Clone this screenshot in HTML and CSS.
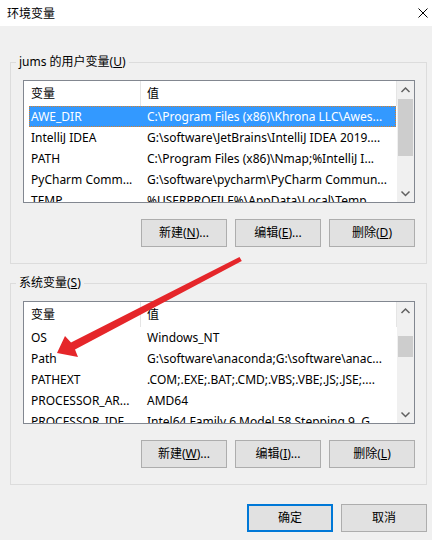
FILE: index.html
```html
<!DOCTYPE html>
<html lang="zh-CN">
<head>
<meta charset="utf-8">
<title>环境变量</title>
<link rel="stylesheet" href="styles.css">
</head>
<body>
<div class="titlebar">
  <span class="title">环境变量</span>
  <svg class="close" width="10" height="10" viewBox="0 0 10 10"><path d="M0.5 0.5 L9.5 9.5 M9.5 0.5 L0.5 9.5" stroke="#000" stroke-width="1" fill="none"/></svg>
</div>
<div class="content">
  <section class="group">
    <div class="group-title">jums 的用户变量(<u>U</u>)</div>
    <div class="list">
      <div class="list-body">
        <div class="lv-header"><div class="c1">变量</div><div class="c2">值</div></div>
        <div class="row selected"><div class="c1">AWE_DIR</div><div class="c2">C:\Program Files (x86)\Khrona LLC\Awes...</div></div>
        <div class="row"><div class="c1">IntelliJ IDEA</div><div class="c2">G:\software\JetBrains\IntelliJ IDEA 2019....</div></div>
        <div class="row"><div class="c1">PATH</div><div class="c2">C:\Program Files (x86)\Nmap;%IntelliJ I...</div></div>
        <div class="row"><div class="c1">PyCharm Comm...</div><div class="c2">G:\software\pycharm\PyCharm Commun...</div></div>
        <div class="row"><div class="c1">TEMP</div><div class="c2">%USERPROFILE%\AppData\Local\Temp</div></div>
      </div>
      <div class="scrollbar">
        <div class="sb-btn"><svg width="17" height="17" viewBox="0 0 17 17"><polyline points="4.5,11 8.5,7 12.5,11" fill="none" stroke="#606060" stroke-width="1.5"/></svg></div>
        <div class="sb-track"><div class="sb-thumb" style="margin-top:1px;height:57px"></div></div>
        <div class="sb-btn"><svg width="17" height="17" viewBox="0 0 17 17"><polyline points="4.5,6.5 8.5,10.5 12.5,6.5" fill="none" stroke="#606060" stroke-width="1.5"/></svg></div>
      </div>
    </div>
    <div class="buttons">
      <button class="btn">新建(<u>N</u>)...</button>
      <button class="btn">编辑(<u>E</u>)...</button>
      <button class="btn">删除(<u>D</u>)</button>
    </div>
  </section>

  <section class="group group-system">
    <div class="group-title">系统变量(<u>S</u>)</div>
    <div class="list">
      <div class="list-body">
        <div class="lv-header"><div class="c1">变量</div><div class="c2">值</div></div>
        <div class="row"><div class="c1">OS</div><div class="c2">Windows_NT</div></div>
        <div class="row"><div class="c1">Path</div><div class="c2">G:\software\anaconda;G:\software\anac...</div></div>
        <div class="row"><div class="c1">PATHEXT</div><div class="c2">.COM;.EXE;.BAT;.CMD;.VBS;.VBE;.JS;.JSE;....</div></div>
        <div class="row"><div class="c1">PROCESSOR_AR...</div><div class="c2">AMD64</div></div>
        <div class="row"><div class="c1">PROCESSOR_IDE...</div><div class="c2">Intel64 Family 6 Model 58 Stepping 9, G...</div></div>
      </div>
      <div class="scrollbar">
        <div class="sb-btn"><svg width="17" height="17" viewBox="0 0 17 17"><polyline points="4.5,11 8.5,7 12.5,11" fill="none" stroke="#606060" stroke-width="1.5"/></svg></div>
        <div class="sb-track"><div class="sb-thumb" style="margin-top:17px;height:21px"></div></div>
        <div class="sb-btn"><svg width="17" height="17" viewBox="0 0 17 17"><polyline points="4.5,6.5 8.5,10.5 12.5,6.5" fill="none" stroke="#606060" stroke-width="1.5"/></svg></div>
      </div>
    </div>
    <div class="buttons">
      <button class="btn">新建(<u>W</u>)...</button>
      <button class="btn">编辑(<u>I</u>)...</button>
      <button class="btn">删除(<u>L</u>)</button>
    </div>
  </section>

  <div class="dialog-buttons">
    <button class="btn btn-default">确定</button>
    <button class="btn">取消</button>
  </div>
</div>

<svg class="annotation" width="432" height="540" viewBox="0 0 432 540">
  <polygon points="239.5,257 241.8,261 75,349.5 78,357 57,353 65,336 71,342.5" fill="#e5262a"/>
</svg>
</body>
</html>
```

FILE: styles.css
```css
* { box-sizing: border-box; }

html, body {
  margin: 0;
  padding: 0;
}

body {
  width: 432px;
  height: 540px;
  overflow: hidden;
  background: #f0f0f0;
  font-family: "Noto Sans", "Noto Sans CJK SC", sans-serif;
  font-size: 12px;
  color: #000;
}

.titlebar {
  height: 26px;
  background: #fff;
  display: flex;
  align-items: center;
  justify-content: space-between;
  padding: 0 4px 0 7px;
}

.title {
  font-size: 12px;
  line-height: 26px;
  font-family: "Noto Sans CJK SC", sans-serif;
}

.close { display: block; margin-top: -1px; }

.content {
  padding: 0 5px 0 10px;
}

.group {
  border: 1px solid #dcdcdc;
  padding: 0 11px 16px 12px;
  margin-top: 36px;
}

.group-system { margin-top: 19px; }

.group-title {
  margin: -9px 0 0 -7px;
  width: fit-content;
  padding: 0 3px;
  background: #f0f0f0;
  line-height: 16px;
  height: 16px;
  white-space: nowrap;
}

u { text-decoration: underline; }

.list {
  margin-top: 10px;
  height: 123px;
  border: 1px solid #828790;
  background: #fff;
  display: flex;
}

.list-body {
  flex: 1;
  overflow: hidden;
  padding-left: 5px;
  min-width: 0;
}

.lv-header {
  display: flex;
  height: 25px;
  line-height: 25px;
}

.lv-header .c1 {
  width: 112px;
  padding-left: 2px;
  border-right: 1px solid #e5e5e5;
}

.lv-header .c2 {
  flex: 1;
  padding-left: 6px;
  border-right: 1px solid #e5e5e5;
}

.row {
  display: flex;
  height: 21px;
  line-height: 21px;
  margin-right: 1px;
  white-space: nowrap;
}

.row .c1 {
  width: 112px;
  padding-left: 2px;
  overflow: hidden;
  flex-shrink: 0;
}

.row .c2 {
  flex: 1;
  padding-left: 6px;
  overflow: hidden;
  min-width: 0;
}

.row.selected {
  background: #3399ff;
  color: #fff;
  outline: 1px dotted #d8802a;
  outline-offset: -1px;
}

.scrollbar {
  width: 17px;
  flex-shrink: 0;
  background: #f0f0f0;
  display: flex;
  flex-direction: column;
}

.sb-btn {
  height: 17px;
  flex-shrink: 0;
}

.sb-btn svg { display: block; }

.sb-track {
  flex: 1;
}

.sb-thumb {
  width: 15px;
  margin-left: 1px;
  background: #cdcdcd;
}

.buttons {
  display: flex;
  justify-content: flex-end;
  gap: 8px;
  margin-top: 16px;
}

.btn {
  width: 86px;
  height: 28px;
  border: 1px solid #adadad;
  background: #e1e1e1;
  font-family: "Noto Sans", "Noto Sans CJK SC", sans-serif;
  font-size: 12px;
  color: #000;
  padding: 0;
  margin: 0;
  line-height: 26px;
}

.btn-default {
  border: 2px solid #0078d7;
  line-height: 24px;
}

.dialog-buttons {
  display: flex;
  justify-content: flex-end;
  gap: 8px;
  margin-top: 19px;
}

.annotation {
  position: absolute;
  left: 0;
  top: 0;
  pointer-events: none;
}
```
